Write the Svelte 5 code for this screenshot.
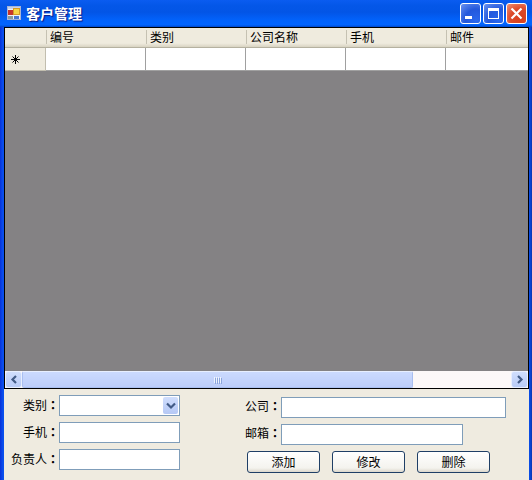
<script>
  const columns = ['编号', '类别', '公司名称', '手机', '邮件'];
  const actions = ['添加', '修改', '删除'];
</script>

<div class="window">
  <header class="titlebar">
    <svg class="logo" width="16" height="16" viewBox="0 0 16 16" aria-hidden="true">
      <rect x="1.5" y="0.500" width="13" height="13" fill="#eef0f6" stroke="#a9b6d6" />
      <rect x="2" y="1" width="12" height="2" fill="#c5d2ec" />
      <rect x="2" y="4" width="5" height="5" fill="#c8352b" />
      <rect x="7.5" y="2.500" width="6" height="6" fill="#f8d548" stroke="#d79b25" />
      <rect x="2" y="10" width="5" height="3" fill="#8d9a9b" />
      <rect x="8" y="10" width="5" height="3" fill="#4c78d0" />
    </svg>
    <h1>客户管理</h1>
    <div class="controls">
      <button type="button" class="control" aria-label="最小化">
        <svg width="19" height="19" viewBox="0 0 19 19"><path d="M4 12h7v3H4z" fill="#fff" /></svg>
      </button>
      <button type="button" class="control" aria-label="最大化">
        <svg width="19" height="19" viewBox="0 0 19 19">
          <path d="M4 4h11v11H4zM5 7v7h9V7z" fill="#fff" fill-rule="evenodd" />
        </svg>
      </button>
      <button type="button" class="control close" aria-label="关闭">
        <svg width="19" height="19" viewBox="0 0 19 19">
          <path d="M4.500 4.500l10 10M14.500 4.500l-10 10" stroke="#fff" stroke-width="2.2" fill="none" />
        </svg>
      </button>
    </div>
  </header>

  <main>
    <section class="grid">
      <div class="viewport">
        <table>
          <thead>
            <tr>
              <th class="corner"></th>
              {#each columns as column}
                <th scope="col"><span>{column}</span></th>
              {/each}
            </tr>
          </thead>
          <tbody>
            <tr>
              <th class="marker" scope="row">
                <svg width="9" height="9" viewBox="0 0 9 9" aria-hidden="true">
                  <path d="M4.5 0v9M0 4.5h9M1.5 1.5l6 6M7.5 1.5l-6 6" stroke="#000" fill="none" />
                </svg>
              </th>
              {#each columns as column}
                <td></td>
              {/each}
            </tr>
          </tbody>
        </table>
      </div>
      <div class="scrollbar">
        <button type="button" class="arrow" aria-label="向左滚动">
          <svg width="8" height="9" viewBox="0 0 8 9"><path d="M6 1L2.5 4.5 6 8" /></svg>
        </button>
        <div class="track">
          <div class="thumb"><i></i><i></i><i></i><i></i></div>
        </div>
        <button type="button" class="arrow" aria-label="向右滚动">
          <svg width="8" height="9" viewBox="0 0 8 9"><path d="M2 1l3.500 3.500L2 8" /></svg>
        </button>
      </div>
    </section>

    <form>
      <div class="fields left">
        <div class="row">
          <label for="category">类别<b>：</b></label>
          <div class="combo">
            <select id="category"><option></option></select>
            <span class="drop">
              <svg width="10" height="8" viewBox="0 0 10 8" aria-hidden="true"><path d="M1 1.500l4 4 4-4" /></svg>
            </span>
          </div>
        </div>
        <div class="row">
          <label for="mobile">手机<b>：</b></label>
          <input id="mobile" type="text" />
        </div>
        <div class="row">
          <label for="owner">负责人<b>：</b></label>
          <input id="owner" type="text" />
        </div>
      </div>

      <div class="fields right">
        <div class="row">
          <label for="company">公司<b>：</b></label>
          <input id="company" type="text" />
        </div>
        <div class="row">
          <label for="email">邮箱<b>：</b></label>
          <input id="email" class="short" type="text" />
        </div>
        <div class="actions">
          {#each actions as action}
            <button type="button">{action}</button>
          {/each}
        </div>
      </div>
    </form>
  </main>
</div>

<style>
  .window {
    display: flex;
    flex-direction: column;
    height: 100vh;
    min-height: 240px;
    box-sizing: border-box;
    overflow: hidden;
    font: 12px/16px "Noto Sans CJK SC", sans-serif;
    color: #000;
    background: linear-gradient(90deg, #0831d9, #0a50ee 3px, #0a50ee calc(100% - 3px), #0a35b0);
  }

  .window :is(button, input, select) {
    box-sizing: border-box;
    margin: 0;
    padding: 0;
    font: inherit;
    color: inherit;
  }

  .titlebar {
    display: flex;
    align-items: center;
    flex: none;
    height: 27px;
    box-sizing: border-box;
    padding: 0 5px 0 6px;
    background: linear-gradient(#0a5cf0, #0457e8 20%, #0355e6 45%, #0262fb 75%, #0265ff 92%, #0147c8);
  }

  h1 {
    flex: 1;
    margin: 0 0 0 4px;
    padding-bottom: 2px;
    font-size: 14px;
    line-height: 20px;
    font-weight: 700;
    color: #fff;
    text-shadow: 1px 1px 1px #0a1883;
  }

  .controls {
    display: flex;
    gap: 2px;
  }

  .control {
    display: flex;
    width: 21px;
    height: 21px;
    border: 1px solid #fff;
    border-radius: 3px;
    background: radial-gradient(circle at 80% 85%, #2a68ee, #2358dc 50%, #6b93f0);
  }

  .control.close {
    background: radial-gradient(circle at 70% 75%, #d8401c, #dc4a2a 50%, #f09478);
  }

  main {
    display: flex;
    flex-direction: column;
    flex: 1;
    min-height: 0;
    margin: 0 3px 0 4px;
  }

  .grid {
    display: flex;
    flex-direction: column;
    flex: 1;
    min-height: 0;
    border: 1px solid #000;
    background: #848284;
  }

  .viewport {
    flex: 1;
    min-height: 0;
    overflow: hidden;
  }

  table {
    width: 541px;
    table-layout: fixed;
    border-collapse: separate;
    border-spacing: 0;
  }

  th,
  td {
    box-sizing: border-box;
    padding: 0;
    font-weight: 400;
    text-align: left;
  }

  thead th {
    height: 20px;
    padding-bottom: 2px;
    border-bottom: 1px solid #b5b1a0;
    background: linear-gradient(#efebde 80%, #d8d3c2);
  }

  thead span {
    display: block;
    padding-left: 3px;
    border-left: 1px solid #c5c1b2;
    line-height: 14px;
  }

  .corner {
    width: 41px;
  }

  .marker {
    height: 23px;
    padding-left: 6px;
    border-right: 1px solid #c2beaf;
    border-bottom: 1px solid #c2beaf;
    background: #efebde;
  }

  .marker svg {
    display: block;
  }

  td {
    border-right: 1px solid #a0a0a0;
    border-bottom: 1px solid #a0a0a0;
    background: #fff;
  }

  .scrollbar {
    display: flex;
    flex: none;
    height: 17px;
    background: #fcf8f8;
  }

  .arrow {
    display: flex;
    align-items: center;
    justify-content: center;
    width: 17px;
    height: 17px;
    border: 1px solid #e8efff;
    border-radius: 3px;
    background: linear-gradient(#d0defd, #b9cbf6);
  }

  .arrow path,
  .drop path {
    fill: none;
    stroke: #425b86;
    stroke-width: 2.2;
  }

  .track {
    flex: 1;
  }

  .thumb {
    display: flex;
    align-items: center;
    justify-content: center;
    gap: 1px;
    width: 80%;
    height: 17px;
    box-sizing: border-box;
    border: 1px solid #a9bff0;
    border-top-color: #e8efff;
    border-radius: 2px;
    background: linear-gradient(#cbdafe, #bccdfa);
  }

  .thumb i {
    width: 1px;
    height: 6px;
    background: #eef4ff;
    box-shadow: 1px 1px 0 #8ca5dc;
  }

  form {
    display: flex;
    flex: none;
    height: 91px;
    box-sizing: border-box;
    background: #efebe0;
  }

  .fields {
    display: flex;
    flex-direction: column;
    gap: 6px;
  }

  .left {
    flex: none;
    width: 241px;
    padding-top: 6px;
  }

  .right {
    flex: 1;
    padding: 8px 23px 0 0;
  }

  .row {
    display: flex;
    align-items: center;
    height: 21px;
  }

  label {
    flex: none;
    width: 55px;
    padding-bottom: 2px;
    text-align: right;
    white-space: nowrap;
  }

  .right label {
    width: 36px;
    padding-bottom: 4px;
    text-align: left;
  }

  label b {
    font-family: "Noto Sans CJK TC", sans-serif;
  }

  input,
  select {
    display: block;
    width: 121px;
    height: 21px;
    border: 1px solid #7f9db9;
    border-radius: 0;
    background: #fff;
  }

  select {
    appearance: none;
  }

  .right input {
    flex: 1;
    width: auto;
    min-width: 0;
  }

  .right .short {
    flex: none;
    width: 182px;
  }

  .combo {
    position: relative;
  }

  .drop {
    position: absolute;
    top: 2px;
    right: 2px;
    display: flex;
    align-items: center;
    justify-content: center;
    width: 15px;
    height: 17px;
    border-radius: 2px;
    background: linear-gradient(#d0defd, #b5c8f5);
    pointer-events: none;
  }

  .actions {
    display: flex;
    gap: 12px;
    padding-left: 2px;
  }

  .actions button {
    width: 73px;
    height: 22px;
    border: 1px solid #1f3f66;
    border-radius: 3px;
    background: linear-gradient(#fff, #f4f3ee 80%, #dcd7cc);
    line-height: 18px;
  }
</style>
